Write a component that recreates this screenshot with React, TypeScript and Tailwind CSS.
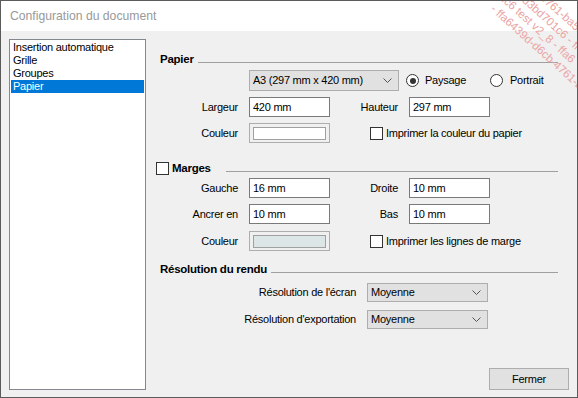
import React from "react";

const Chevron = () => (
  <svg width="9" height="5" viewBox="0 0 9 5" className="shrink-0">
    <polyline points="0.5,0.5 4.5,4.5 8.5,0.5" fill="none" stroke="#555" strokeWidth="1" />
  </svg>
);

const Combo = ({ value, className }: { value: string; className: string }) => (
  <div className={`flex items-center justify-between border border-[#adadad] bg-[#e1e1e1] pl-[3px] pr-[6px] ${className}`}>
    <span>{value}</span>
    <Chevron />
  </div>
);

const Field = ({ value }: { value: string }) => (
  <div className="flex h-[20px] w-[81px] items-center border border-[#7a7a7a] bg-white pl-[3px]">{value}</div>
);

const Swatch = ({ fill }: { fill: string }) => (
  <div className="flex h-[20px] w-[81px] items-center justify-center border border-[#adadad]">
    <div className={`h-[13px] w-[73px] border border-[#a0a0a0] ${fill}`} />
  </div>
);

const Check = () => <div className="h-[13px] w-[13px] shrink-0 border border-[#333] bg-white" />;

const Radio = ({ on }: { on?: boolean }) => (
  <div className="flex h-[13px] w-[13px] shrink-0 items-center justify-center rounded-full border border-[#333] bg-white">
    {on && <div className="h-[6px] w-[6px] rounded-full bg-[#333]" />}
  </div>
);

const Label = ({ children, w }: { children: React.ReactNode; w: string }) => (
  <div className={`${w} pr-[11px] text-right`}>{children}</div>
);

const Section = ({ title, gap, check }: { title: string; gap: string; check?: boolean }) => (
  <div className={`flex h-[14px] items-start ${check ? "" : "pl-[4px]"}`}>
    {check && (
      <div className="mt-[1px] mr-[3px]">
        <Check />
      </div>
    )}
    <span className="text-[11.5px] font-bold leading-[14px]">{title}</span>
    <div className={`mt-[10px] h-px flex-1 bg-[#a0a0a0] ${gap}`} />
  </div>
);

// diagonal watermark stamped over the top right corner
const Watermark = () => {
  const lines = [
    { text: "6cb-4761-ba5c", left: 528, top: -24 },
    { text: "f8 - dd3bd701c6 - ff", left: 507, top: -24 },
    { text: "701c6 test v2_8 - ffa6", left: 494, top: -18 },
    { text: "- ffa6439d-d6cb-4761-ba", left: 495, top: 2 },
  ];
  return (
    <>
      {lines.map((l) => (
        <span
          key={l.text}
          className="pointer-events-none absolute origin-top-left rotate-[42deg] whitespace-nowrap text-[11.5px] leading-none tracking-normal text-[#eba4a4]"
          style={{ left: l.left, top: l.top }}
        >
          {l.text}
        </span>
      ))}
    </>
  );
};

const App = () => {
  const items = ["Insertion automatique", "Grille", "Groupes", "Papier"];

  return (
    <div className="relative flex h-[398px] w-[578px] flex-col overflow-hidden border border-[#5b5b5b] bg-[#f0f0f0] font-['Liberation_Sans',Arial,sans-serif] text-[11px] tracking-[-0.25px] text-black">
      <div className="flex h-[30px] shrink-0 items-center bg-white pl-[9px] text-[12.2px] tracking-normal text-[#999]">
        Configuration du document
      </div>

      <div className="flex flex-1 pt-[8px] pl-[8px] pb-[7px]">
        <div className="h-[351px] w-[137px] shrink-0 border border-[#828790] bg-white px-px pt-px">
          {items.map((it) => (
            <div
              key={it}
              className={`h-[13px] pl-[2px] leading-[13px] ${it === "Papier" ? "bg-[#0078d7] text-white" : ""}`}
            >
              {it}
            </div>
          ))}
        </div>

        <div className="ml-[10px] flex flex-1 flex-col pr-[8px]">
          <div className="flex w-[402px] flex-col">
            <div className="mt-[13px]">
              <Section title="Papier" gap="ml-[4px]" />
            </div>

            <div className="mt-[4px] flex h-[21px] items-center pl-[93px]">
              <Combo value="A3 (297 mm x 420 mm)" className="h-[21px] w-[150px]" />
              <div className="ml-[7px] flex w-[84px] items-center">
                <Radio on />
                <span className="ml-[6px]">Paysage</span>
              </div>
              <div className="flex items-center">
                <Radio />
                <span className="ml-[7px]">Portrait</span>
              </div>
            </div>

            <div className="mt-[6px] flex items-center">
              <Label w="w-[93px]">Largeur</Label>
              <Field value="420 mm" />
              <Label w="w-[79px]">Hauteur</Label>
              <Field value="297 mm" />
            </div>

            <div className="mt-[6px] flex items-center">
              <Label w="w-[93px]">Couleur</Label>
              <Swatch fill="bg-white" />
              <div className="ml-[40px] flex items-center">
                <Check />
                <span className="ml-[3px]">Imprimer la couleur du papier</span>
              </div>
            </div>

            <div className="mt-[18px]">
              <Section title="Marges" gap="ml-[15px]" check />
            </div>

            <div className="mt-[3px] flex items-center">
              <Label w="w-[93px]">Gauche</Label>
              <Field value="16 mm" />
              <Label w="w-[79px]">Droite</Label>
              <Field value="10 mm" />
            </div>

            <div className="mt-[6px] flex items-center">
              <Label w="w-[93px]">Ancrer en</Label>
              <Field value="10 mm" />
              <Label w="w-[79px]">Bas</Label>
              <Field value="10 mm" />
            </div>

            <div className="mt-[7px] flex items-center">
              <Label w="w-[93px]">Couleur</Label>
              <Swatch fill="bg-[#dce6e6]" />
              <div className="ml-[40px] flex items-center">
                <Check />
                <span className="ml-[3px]">Imprimer les lignes de marge</span>
              </div>
            </div>

            <div className="mt-[11px]">
              <Section title="Résolution du rendu" gap="ml-[4px]" />
            </div>

            <div className="mt-[7px] flex items-center">
              <Label w="w-[211px]">Résolution de l'écran</Label>
              <Combo value="Moyenne" className="h-[19px] w-[121px]" />
            </div>

            <div className="mt-[8px] flex items-center">
              <Label w="w-[211px]">Résolution d'exportation</Label>
              <Combo value="Moyenne" className="h-[19px] w-[121px]" />
            </div>
          </div>

          <button className="mt-auto h-[22px] w-[80px] self-end border border-[#adadad] bg-[#e1e1e1] text-[11px]">
            Fermer
          </button>
        </div>
      </div>

      <Watermark />
    </div>
  );
};

export default App;
